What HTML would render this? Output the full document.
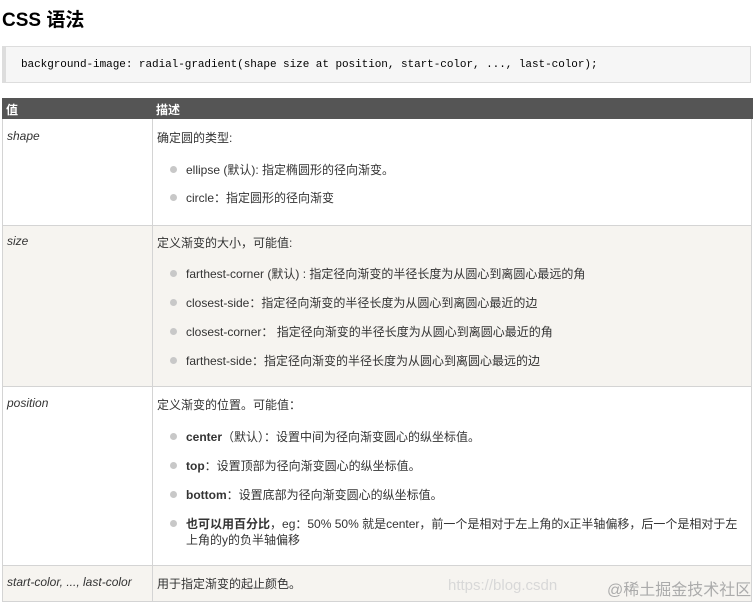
<!DOCTYPE html><html><head><meta charset="utf-8"><style>
body{margin:0;width:753px;height:604px;overflow:hidden;background:#fff;font-family:"Liberation Sans","Noto Sans CJK SC",sans-serif;font-size:12px;color:#333;position:relative}
.a{position:absolute;white-space:nowrap}
h1{position:absolute;left:2px;top:5px;margin:0;font-size:19px;font-weight:bold;color:#000}
.code{position:absolute;left:2px;top:46px;width:749px;height:37px;background:#f6f6f6;border:1px solid #ddd;border-left:4px solid #ddd;box-sizing:border-box}
.code span{position:absolute;left:15px;top:12px;font-family:"Liberation Mono",monospace;font-size:11px;color:#000;letter-spacing:-0.05px}
.hd{position:absolute;left:2px;top:98px;width:751px;height:21px;background:#555}
.row{position:absolute;left:2px;width:750px;border:1px solid #d4d4d4;border-top:none;box-sizing:border-box}
.vl{position:absolute;left:152px;top:119px;width:1px;height:482px;background:#d4d4d4}
.dot{position:absolute;width:7px;height:7px;border-radius:50%;background:#c8c8c8}
i{font-style:italic}
</style></head><body>
<h1>CSS 语法</h1>
<div class="code"><span>background-image: radial-gradient(shape size at position, start-color, ..., last-color);</span></div>
<div class="hd"></div>
<div class="a" style="left:6px;top:101px;color:#fff;font-weight:bold">值</div>
<div class="a" style="left:156px;top:101px;color:#fff;font-weight:bold">描述</div>
<div class="row" style="top:119px;height:107px;background:#fff"></div>
<div class="row" style="top:226px;height:161px;background:#f6f4f0"></div>
<div class="row" style="top:387px;height:179px;background:#fff"></div>
<div class="row" style="top:566px;height:36px;background:#f6f4f0"></div>
<div class="vl"></div>
<div class="a" style="left:7px;top:129px"><i>shape</i></div>
<div class="a" style="left:157px;top:129px">确定圆的类型:</div>
<div class="dot" style="left:170px;top:166px"></div><div class="a" style="left:186px;top:161px">ellipse (默认): 指定椭圆形的径向渐变。</div>
<div class="dot" style="left:170px;top:194px"></div><div class="a" style="left:186px;top:189px">circle：指定圆形的径向渐变</div>
<div class="a" style="left:7px;top:234px"><i>size</i></div>
<div class="a" style="left:157px;top:234px">定义渐变的大小，可能值:</div>
<div class="dot" style="left:170px;top:270px"></div><div class="a" style="left:186px;top:265px">farthest-corner (默认) : 指定径向渐变的半径长度为从圆心到离圆心最远的角</div>
<div class="dot" style="left:170px;top:299px"></div><div class="a" style="left:186px;top:294px">closest-side：指定径向渐变的半径长度为从圆心到离圆心最近的边</div>
<div class="dot" style="left:170px;top:328px"></div><div class="a" style="left:186px;top:323px">closest-corner： 指定径向渐变的半径长度为从圆心到离圆心最近的角</div>
<div class="dot" style="left:170px;top:357px"></div><div class="a" style="left:186px;top:352px">farthest-side：指定径向渐变的半径长度为从圆心到离圆心最远的边</div>
<div class="a" style="left:7px;top:396px"><i>position</i></div>
<div class="a" style="left:157px;top:396px">定义渐变的位置。可能值：</div>
<div class="dot" style="left:170px;top:433px"></div><div class="a" style="left:186px;top:428px"><b>center</b>（默认）：设置中间为径向渐变圆心的纵坐标值。</div>
<div class="dot" style="left:170px;top:462px"></div><div class="a" style="left:186px;top:457px"><b>top</b>：设置顶部为径向渐变圆心的纵坐标值。</div>
<div class="dot" style="left:170px;top:491px"></div><div class="a" style="left:186px;top:486px"><b>bottom</b>：设置底部为径向渐变圆心的纵坐标值。</div>
<div class="dot" style="left:170px;top:520px"></div><div class="a" style="left:186px;top:515px"><b>也可以用百分比</b>，eg：50% 50% 就是center，前一个是相对于左上角的x正半轴偏移，后一个是相对于左</div>
<div class="a" style="left:186px;top:531px">上角的y的负半轴偏移</div>
<div class="a" style="left:7px;top:575px"><i>start-color, ..., last-color</i></div>
<div class="a" style="left:157px;top:575px">用于指定渐变的起止颜色。</div>
<div class="a" style="left:448px;top:577px;font-size:15px;color:#d8d8d8">https://blog.csdn</div>
<div class="a" style="left:607px;top:576px;font-size:16px;color:#ababab">@稀土掘金技术社区</div>
</body></html>
